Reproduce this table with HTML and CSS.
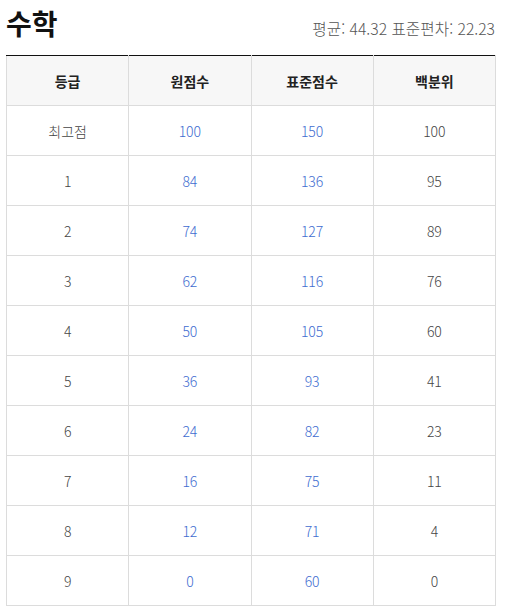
FILE: index.html
```html
<!DOCTYPE html>
<html lang="ko">
<head>
<meta charset="utf-8">
<link rel="stylesheet" href="styles.css">
</head>
<body>
<div class="wrap">
  <div class="head">
    <h1 class="title">수학</h1>
    <div class="stats">평균: 44.32 표준편차: 22.23</div>
  </div>
  <table class="grade">
    <thead>
      <tr><th>등급</th><th>원점수</th><th>표준점수</th><th>백분위</th></tr>
    </thead>
    <tbody>
      <tr><td>최고점</td><td class="b">100</td><td class="b">150</td><td>100</td></tr>
      <tr><td>1</td><td class="b">84</td><td class="b">136</td><td>95</td></tr>
      <tr><td>2</td><td class="b">74</td><td class="b">127</td><td>89</td></tr>
      <tr><td>3</td><td class="b">62</td><td class="b">116</td><td>76</td></tr>
      <tr><td>4</td><td class="b">50</td><td class="b">105</td><td>60</td></tr>
      <tr><td>5</td><td class="b">36</td><td class="b">93</td><td>41</td></tr>
      <tr><td>6</td><td class="b">24</td><td class="b">82</td><td>23</td></tr>
      <tr><td>7</td><td class="b">16</td><td class="b">75</td><td>11</td></tr>
      <tr><td>8</td><td class="b">12</td><td class="b">71</td><td>4</td></tr>
      <tr><td>9</td><td class="b">0</td><td class="b">60</td><td>0</td></tr>
    </tbody>
  </table>
</div>
</body>
</html>
```

FILE: styles.css
```css
html, body { margin: 0; padding: 0; background: #fff; }
body { font-family: "Noto Sans CJK KR", "Noto Sans", sans-serif; color: #333; }
.wrap { width: 490px; margin-left: 6px; }
.head { display: flex; justify-content: space-between; align-items: flex-end; height: 55px; box-sizing: border-box; padding-bottom: 14px; }
.title { margin: 0; font-size: 28px; font-weight: 700; line-height: 36px; color: #111; }
.stats { font-size: 15.7px; font-weight: 300; color: #555; line-height: 20px; padding-bottom: 2px; padding-right: 1px; }
.grade { width: 490px; border-collapse: collapse; table-layout: fixed; border-top: 1px solid #111; }
.grade th, .grade td { height: 49px; padding: 0; text-align: center; border: 1px solid #dcdcdc; font-size: 14px; }
.grade tr:first-child th { border-top: 1px solid #111; }
.grade th { background: #f7f7f7; font-weight: 700; color: #222; }
.grade td { font-weight: 300; color: #444; }
.grade td.b { color: #3e6cd0; }
```
